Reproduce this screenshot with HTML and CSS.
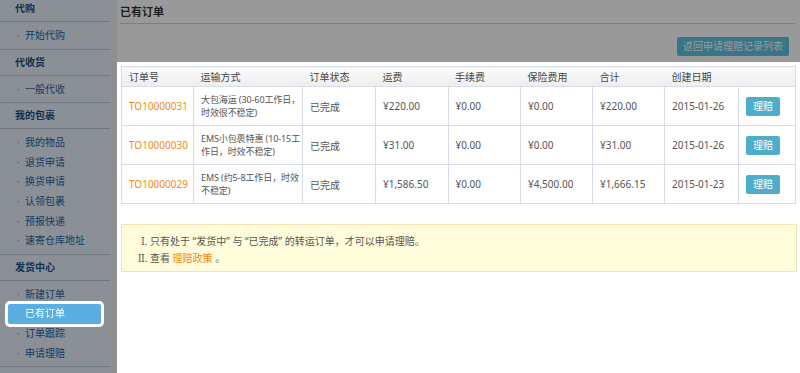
FILE: index.html
```html
<!DOCTYPE html>
<html lang="zh-CN">
<head>
  <meta charset="UTF-8">
  <meta name="viewport" content="width=device-width, initial-scale=1.0">
  <title>已有订单</title>
  <link rel="stylesheet" href="styles.css">
</head>
<body>
  <div class="layout">
    <!-- 左侧菜单 -->
    <aside class="sidebar">
      <div class="nav-group">
        <h3 class="nav-title">代购</h3>
        <ul class="nav-list">
          <li><a href="#">开始代购</a></li>
        </ul>
      </div>
      <div class="nav-group">
        <h3 class="nav-title">代收货</h3>
        <ul class="nav-list">
          <li><a href="#">一般代收</a></li>
        </ul>
      </div>
      <div class="nav-group">
        <h3 class="nav-title">我的包裹</h3>
        <ul class="nav-list">
          <li><a href="#">我的物品</a></li>
          <li><a href="#">退货申请</a></li>
          <li><a href="#">换货申请</a></li>
          <li><a href="#">认领包裹</a></li>
          <li><a href="#">预报快递</a></li>
          <li><a href="#">速寄仓库地址</a></li>
        </ul>
      </div>
      <div class="nav-group">
        <h3 class="nav-title">发货中心</h3>
        <ul class="nav-list">
          <li><a href="#">新建订单</a></li>
          <li class="active"><a href="#" class="tour-target">已有订单</a></li>
          <li><a href="#">订单跟踪</a></li>
          <li><a href="#">申请理赔</a></li>
        </ul>
      </div>
    </aside>

    <!-- 主内容 -->
    <main class="content">
      <h2 class="page-title">已有订单</h2>
      <div class="toolbar">
        <a href="#" class="btn btn-info">返回申请理赔记录列表</a>
      </div>

      <!-- 引导高亮区域 -->
      <section class="orders-panel tour-target">
        <table class="orders">
          <colgroup>
            <col class="c-no"><col class="c-ship"><col class="c-status"><col class="c-fee">
            <col class="c-fee"><col class="c-ins"><col class="c-total"><col class="c-date"><col class="c-op">
          </colgroup>
          <thead>
            <tr>
              <th>订单号</th>
              <th>运输方式</th>
              <th>订单状态</th>
              <th>运费</th>
              <th>手续费</th>
              <th>保险费用</th>
              <th>合计</th>
              <th>创建日期</th>
              <th></th>
            </tr>
          </thead>
          <tbody>
            <tr>
              <td><a href="#" class="order-no">TO10000031</a></td>
              <td class="ship">大包海运 (30-60工作日，时效很不稳定)</td>
              <td>已完成</td>
              <td>¥220.00</td>
              <td>¥0.00</td>
              <td>¥0.00</td>
              <td>¥220.00</td>
              <td>2015-01-26</td>
              <td><a href="#" class="btn btn-claim">理赔</a></td>
            </tr>
            <tr>
              <td><a href="#" class="order-no">TO10000030</a></td>
              <td class="ship">EMS小包裹特惠 (10-15工作日，时效不稳定)</td>
              <td>已完成</td>
              <td>¥31.00</td>
              <td>¥0.00</td>
              <td>¥0.00</td>
              <td>¥31.00</td>
              <td>2015-01-26</td>
              <td><a href="#" class="btn btn-claim">理赔</a></td>
            </tr>
            <tr>
              <td><a href="#" class="order-no">TO10000029</a></td>
              <td class="ship">EMS (约5-8工作日，时效不稳定)</td>
              <td>已完成</td>
              <td>¥1,586.50</td>
              <td>¥0.00</td>
              <td>¥4,500.00</td>
              <td>¥1,666.15</td>
              <td>2015-01-23</td>
              <td><a href="#" class="btn btn-claim">理赔</a></td>
            </tr>
          </tbody>
        </table>

        <div class="notice">
          <ol>
            <li>只有处于 “发货中” 与 “已完成” 的转运订单，才可以申请理赔。</li>
            <li>查看 <a href="#">理赔政策</a> 。</li>
          </ol>
        </div>
      </section>
    </main>
  </div>

  <!-- 新手引导遮罩 -->
  <div class="tour-overlay"></div>
</body>
</html>
```

FILE: styles.css
```css
/* 基础 */
body {
  margin: 0;
  font-family: "Noto Sans", "Noto Sans CJK SC", sans-serif;
  font-size: 10px;
  color: #555;
  background: #fff;
  overflow: hidden;
}

a {
  text-decoration: none;
}

.layout {
  display: flex;
  min-height: 373px;
}

/* 左侧菜单 */
.sidebar {
  width: 117px;
  flex: none;
  box-sizing: border-box;
  background: #e6f0fa;
  border-right: 7px solid #eaf0f6;
  margin-top: -4px;
}

.nav-title {
  margin: 0;
  height: 26px;
  line-height: 25px;
  box-sizing: border-box;
  border-bottom: 1px solid #bccbdb;
  padding-left: 15px;
  font-size: 10px;
  font-weight: bold;
  color: #1c4f88;
}

.nav-list {
  list-style: none;
  margin: 0;
  padding: 4px 0 3px;
  border-bottom: 1px solid #bccbdb;
}

.nav-list li {
  height: 19.6px;
  line-height: 19.6px;
}

.nav-list a {
  display: block;
  padding-left: 25px;
  color: #2a62a6;
}

.nav-list a::before {
  content: "·";
  float: left;
  width: 7px;
  margin-left: -8px;
  color: #8f9caa;
}

/* 当前菜单 */
.nav-list li.active a {
  margin: 0 9px 0 8px;
  padding-left: 17px;
  background: #5aaee2;
  color: #fff;
  border-radius: 2px;
  box-shadow: 0 0 0 3px #fff;
}

.nav-list li.active a::before {
  display: none;
}

/* 主内容 */
.content {
  flex: 1;
  display: flex;
  flex-direction: column;
  min-width: 0;
}

.page-title {
  margin: 0 5px 0 3px;
  height: 24px;
  line-height: 23px;
  box-sizing: border-box;
  border-bottom: 1px solid #d2d2d2;
  font-size: 11px;
  font-weight: bold;
  color: #333;
}

.toolbar {
  display: flex;
  justify-content: flex-end;
  padding: 13px 11px 6px 0;
}

.btn {
  display: inline-block;
  color: #fff;
  border-radius: 2px;
  text-align: center;
}

.btn-info {
  height: 19px;
  line-height: 19px;
  padding: 0 6px;
  background: #5ec3df;
  font-size: 10px;
}

.orders-panel {
  flex: 1;
  background: #fff;
  padding: 4px 5px 0 4px;
}

/* 新手引导：遮罩在上，目标元素再抬高一层 */
.tour-overlay {
  position: fixed;
  top: 0;
  left: 0;
  width: 100%;
  height: 100%;
  background: rgba(0, 0, 0, 0.4);
  z-index: 10;
}

.tour-target {
  position: relative;
  z-index: 11;
}

/* 订单表 */
.orders {
  width: 674px;
  table-layout: fixed;
  border-collapse: collapse;
  border: 1px solid #d9dce9;
}

.c-no { width: 72px; }
.c-ship { width: 109px; }
.c-status { width: 73px; }
.c-fee { width: 72.5px; }
.c-ins { width: 72px; }
.c-total { width: 72px; }
.c-date { width: 74px; }
.c-op { width: 57px; }

.orders th {
  height: 19px;
  padding: 0 7px;
  text-align: left;
  font-weight: normal;
  color: #444;
  background: linear-gradient(#fafafa, #eeeeee);
  border-bottom: 1px solid #d9dce9;
}

.orders td {
  height: 38px;
  padding: 0 7px;
  border: 1px solid #d9dce9;
  color: #555;
}

.orders td.ship {
  padding-right: 1px;
  font-size: 9px;
  line-height: 13.5px;
  letter-spacing: -0.1px;
}

.order-no {
  color: #f48a12;
}

.btn-claim {
  width: 34px;
  height: 19px;
  line-height: 19px;
  background: #4eadca;
  font-size: 10px;
}

/* 提示框 */
.notice {
  margin-top: 20px;
  width: 676px;
  box-sizing: border-box;
  background: #fffcdc;
  border: 1px solid #f8e1b2;
  padding: 8px 0 4px;
}

.notice ol {
  margin: 0;
  padding-left: 28px;
  list-style: upper-roman;
  line-height: 17px;
}

.notice a {
  color: #f48a12;
}
```
